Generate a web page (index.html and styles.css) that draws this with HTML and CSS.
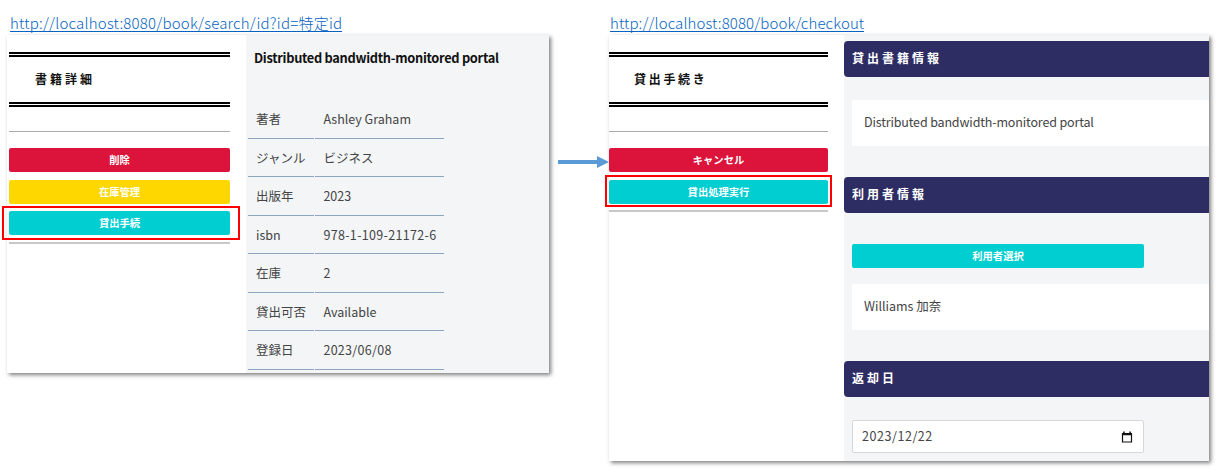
FILE: index.html
```html
<!DOCTYPE html>
<html lang="ja">
<head>
<meta charset="utf-8">
<title>貸出手続</title>
<link rel="stylesheet" href="styles.css">
</head>
<body>
<div class="board">
  <section class="screen screen-detail">
    <a class="url url-detail">http://localhost:8080/book/search/id?id=特定id</a>
    <div class="panel panel-detail">
      <aside class="side">
        <h2 class="side-title">書籍詳細</h2>
        <div class="rule"></div>
        <div class="actions">
          <div class="btn red">削除</div>
          <div class="btn gold">在庫管理</div>
          <div class="btn cyan marked">貸出手続</div>
        </div>
        <div class="rule rule-end"></div>
      </aside>
      <main class="detail">
        <h1 class="book-title">Distributed bandwidth-monitored portal</h1>
        <dl class="facts">
          <dt>著者</dt><dd>Ashley Graham</dd>
          <dt>ジャンル</dt><dd>ビジネス</dd>
          <dt>出版年</dt><dd>2023</dd>
          <dt>isbn</dt><dd class="isbn">978-1-109-21172-6</dd>
          <dt>在庫</dt><dd>2</dd>
          <dt>貸出可否</dt><dd>Available</dd>
          <dt>登録日</dt><dd class="date">2023/06/08</dd>
        </dl>
      </main>
    </div>
  </section>
  <svg class="arrow" width="51" height="12" viewBox="0 0 51 12"><path d="M0 4h39V0l12 6-12 6V8H0z" fill="#5b9bd5"/></svg>
  <section class="screen screen-checkout">
    <a class="url url-checkout">http://localhost:8080/book/checkout</a>
    <div class="panel panel-checkout">
      <aside class="side">
        <h2 class="side-title">貸出手続き</h2>
        <div class="rule"></div>
        <div class="actions">
          <div class="btn red">キャンセル</div>
          <div class="btn cyan marked">貸出処理実行</div>
        </div>
        <div class="rule rule-end"></div>
      </aside>
      <main class="checkout">
        <h3 class="bar">貸出書籍情報</h3>
        <div class="card card-book"><span>Distributed bandwidth-monitored portal</span></div>
        <h3 class="bar">利用者情報</h3>
        <div class="btn cyan btn-user">利用者選択</div>
        <div class="card card-user"><span>Williams 加奈</span></div>
        <h3 class="bar">返却日</h3>
        <div class="date-field"><span>2023/12/22</span>
          <svg width="12" height="12" viewBox="0 0 12 12"><path d="M1.5 2.5h9v8.500h-9z" fill="none" stroke="#111" stroke-width="1.2"/><path d="M1 2h10v2.300H1zM2.200.6h1.500V2H2.200zM8.300.6h1.500V2H8.300z" fill="#111"/></svg>
        </div>
      </main>
    </div>
  </section>
</div>
</body>
</html>
```
FILE: styles.css
```css
* { box-sizing: border-box; margin: 0; padding: 0; }
body {
  width: 1227px; height: 476px; overflow: hidden; background: #fff; color: #444;
  font-family: "Noto Sans CJK JP", "Noto Sans", sans-serif; font-size: 12.5px; font-weight: 400;
}
.board { display: flex; align-items: flex-start; padding-left: 7px; }
.screen { display: flex; flex-direction: column; align-items: flex-start; padding-top: 14px; }
.screen-detail { width: 542px; }
.screen-checkout { width: 600px; }
.url {
  height: 18px; margin: 0 0 3px 3px; line-height: 18px; font-size: 15px; font-weight: 300;
  letter-spacing: .22px; color: #0563c1; border-bottom: 1px solid #0563c1; white-space: nowrap;
}
.url-checkout { margin-left: 1px; letter-spacing: .12px; }
.panel { display: flex; width: 100%; background: #fff; box-shadow: 2px 2px 4px rgba(0,0,0,.5); }
.panel-detail { height: 338px; }
.panel-checkout { height: 426px; }
.side { display: flex; flex-direction: column; width: 239px; padding: 17px 16px 0 2px; }
.panel-checkout .side { width: 235px; padding-left: 0; }
.side-title {
  height: 55px; border-top: 5px double #000; border-bottom: 5px double #000; padding-left: 26px;
  font-size: 12px; line-height: 43px; letter-spacing: 3px; font-weight: 600; color: #111;
}
.panel-checkout .side-title { padding-left: 25px; letter-spacing: 2.7px; }
.rule { height: 1px; margin-top: 24px; background: #aaa; }
.rule-end { margin-top: 7px; height: 2px; background: #c8c8c8; }
.panel-checkout .rule-end { background: #c8c8c8; margin-top: 6.5px; }
.actions { display: flex; flex-direction: column; gap: 7.5px; margin-top: 16px; }
.btn {
  position: relative; height: 24px; border-radius: 2px; line-height: 24px; text-align: center;
  color: #fff; font-size: 10.3px; font-weight: 600;
}
.red { background: #dc143c; }
.gold { background: #ffd700; }
.cyan { background: #00ced1; }
.marked::after { content: ""; position: absolute; inset: -5px -10px -5px -7px; border: 2px solid #f00; }
.panel-checkout .marked::after { inset: -5px -4px -3px -4px; }
.detail { width: 303px; background: #f3f5f7; padding: 11px 0 0 2px; }
.book-title { height: 24px; line-height: 24px; padding-left: 6px; font-size: 12.8px; letter-spacing: -.29px; font-weight: 600; color: #111; white-space: nowrap; }
.facts { display: grid; grid-template-columns: 66px 129px; grid-auto-rows: 38.5px; column-gap: 1.4px; margin-top: 30px; }
.facts dt, .facts dd { padding-left: 8px; line-height: 38px; border-bottom: 1px solid #8da5bf; white-space: nowrap; }
.facts .isbn { letter-spacing: .33px; }
.facts .date { letter-spacing: .3px; }
.checkout { width: 365px; background: #f3f5f7; padding-top: 5.5px; }
.bar {
  height: 36px; border-radius: 4px 0 0 4px; padding-left: 8px; background: #2d2d64; color: #fff;
  font-size: 12px; line-height: 34px; letter-spacing: 3px; font-weight: 600;
}
.card { height: 45.5px; margin-left: 8px; padding-left: 12px; background: #fff; line-height: 44px; white-space: nowrap; }
.card-book { margin-top: 23.5px; margin-bottom: 31.5px; letter-spacing: -.15px; }
.btn-user { width: 292px; margin: 31px 0 0 8px; }
.card-user { margin-top: 16px; margin-bottom: 31px; }
.date-field {
  display: flex; align-items: center; justify-content: space-between; width: 292px; height: 33px;
  margin: 23.5px 0 0 8px; padding: 0 10px 0 9px; border: 1px solid #d6d6d6; border-radius: 2px; background: #fff;
}
.date-field span { letter-spacing: .55px; line-height: 18px; padding-bottom: 1px; }
.arrow { margin: 156px 0 0 9px; width: 51px; flex: none; }
```
